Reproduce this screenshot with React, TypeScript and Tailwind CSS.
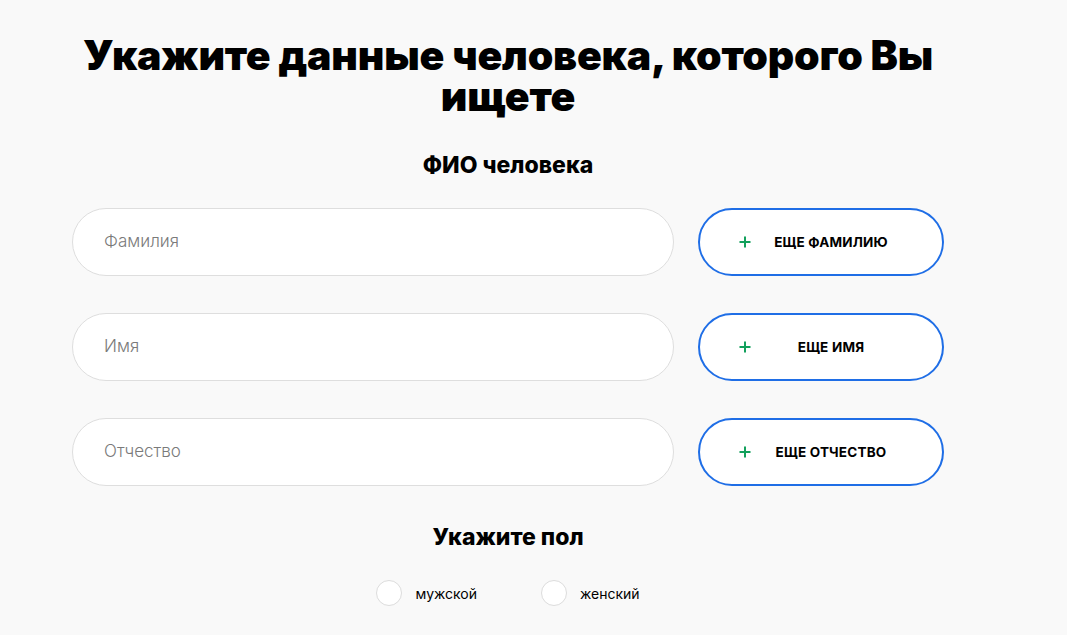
import React from "react";

const rows = [
  { placeholder: "Фамилия", button: "Еще фамилию" },
  { placeholder: "Имя", button: "Еще имя" },
  { placeholder: "Отчество", button: "Еще отчество" },
];

const PlusIcon = () => (
  <svg width="12" height="12" viewBox="0 0 12 12" className="shrink-0">
    <path d="M6 0.5v11M0.5 6h11" stroke="#12a05c" strokeWidth="2" />
  </svg>
);

const App = () => {
  return (
    <div
      className="min-h-[635px] w-full bg-[#f9f9f9] text-black"
      style={{ fontFamily: "Inter, 'Noto Sans', sans-serif" }}
    >
      <div className="w-[872px] ml-[72px] flex flex-col items-center pt-[35px]">
        {/* title */}
        <h1 className="text-[41px] leading-[41px] font-black text-center tracking-[-0.2px] px-2">
          Укажите данные человека, которого Вы ищете
        </h1>

        <h2 className="mt-[33px] text-[23px] leading-[30px] font-extrabold">ФИО человека</h2>

        {/* name rows */}
        <div className="mt-[28px] w-full flex flex-col gap-[37px]">
          {rows.map((row) => (
            <div key={row.placeholder} className="flex gap-[24px]">
              <div className="w-[602px] h-[68px] bg-white border border-[#dedede] rounded-full flex items-center pl-[31px]">
                <span className="text-[17px] text-[#7a7a7a] font-light">{row.placeholder}</span>
              </div>
              <button className="w-[246px] h-[68px] bg-white border-2 border-[#1f6ee6] rounded-full flex items-center pl-[39px] pr-[31px]">
                <PlusIcon />
                <span className="flex-1 text-center text-[13.5px] font-bold uppercase tracking-[0.2px]">
                  {row.button}
                </span>
              </button>
            </div>
          ))}
        </div>

        {/* gender */}
        <h2 className="mt-[36px] text-[23px] leading-[30px] font-extrabold">Укажите пол</h2>
        <div className="mt-[28px] flex items-center gap-[64px] ml-[0px]">
          <label className="flex items-center gap-[13px]">
            <span className="w-[26px] h-[26px] rounded-full bg-white border border-[#dcdcdc]" />
            <span className="text-[14px]">мужской</span>
          </label>
          <label className="flex items-center gap-[13px]">
            <span className="w-[26px] h-[26px] rounded-full bg-white border border-[#dcdcdc]" />
            <span className="text-[14px]">женский</span>
          </label>
        </div>
      </div>
    </div>
  );
};

export default App;
